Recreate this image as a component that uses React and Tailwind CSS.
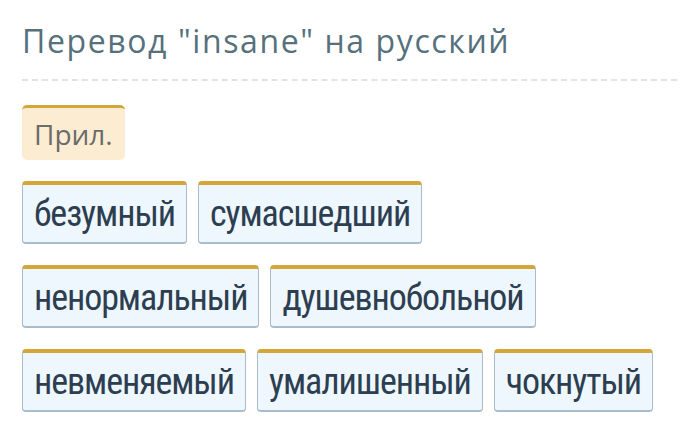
import React from 'react';

const rows = [
  ['безумный', 'сумасшедший'],
  ['ненормальный', 'душевнобольной'],
  ['невменяемый', 'умалишенный', 'чокнутый'],
];

const Tag = ({ word }) => (
  <div className="h-[63px] px-[11px] flex items-center rounded-[4px] bg-[#eef7fd] border border-[#a9bccb] border-b-2 border-t-[4px] border-t-[#d4a537] text-[#2c3e50] text-[36px] leading-none font-stretch-[75%] tracking-[-1.1px] font-['Roboto',sans-serif]">
    {word}
  </div>
);

export default function App() {
  return (
    <div className="w-[693px] h-[431px] bg-white pl-[22px] pr-[16px] pt-[20px] font-['Open_Sans',sans-serif]">
      <h1 className="text-[32px] leading-[42px] text-[#56707c] tracking-[1.6px]">
        Перевод "insane" на русский
      </h1>
      <div className="mt-[17px] border-t-2 border-dashed border-[#e3e3e3]" />
      <div className="mt-[24px] flex">
        <div className="h-[55px] px-[12px] flex items-center rounded-[5px] bg-[#fcedd2] border-t-[3px] border-[#d4a537] text-[#6b6b6b] text-[28px]">
          Прил.
        </div>
      </div>
      <div className="mt-[21px] flex flex-col gap-[21px]">
        {rows.map((row, i) => (
          <div key={i} className="flex gap-[11px]">
            {row.map((w) => (
              <Tag key={w} word={w} />
            ))}
          </div>
        ))}
      </div>
    </div>
  );
}
